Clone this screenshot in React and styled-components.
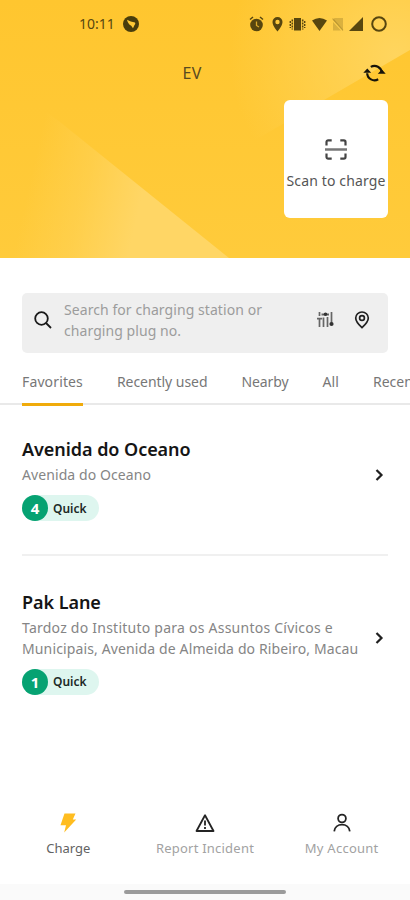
import React from 'react';
import styled, { createGlobalStyle } from 'styled-components';

const GlobalStyle = createGlobalStyle`
  * { box-sizing: border-box; }
  body { margin: 0; background: #fff; font-family: "Noto Sans", "Open Sans", sans-serif; }
  button { border: 0; padding: 0; background: none; font: inherit; color: inherit; display: flex; }
  svg { display: block; flex: none; }
`;

const Screen = styled.div`
  width: 410px;
  height: 900px;
  overflow: hidden;
  display: flex;
  flex-direction: column;
  background: #fff;
`;

const Hero = styled.header`
  position: relative;
  height: 258px;
  flex: none;
  display: flex;
  flex-direction: column;
  background: linear-gradient(#ffc62f, #ffcb3b);
`;

const Beams = styled.svg`
  position: absolute;
  inset: 0;
`;

const StatusBar = styled.div`
  position: relative;
  height: 48px;
  padding: 0 22px 0 79px;
  display: flex;
  align-items: center;
  color: #57460f;
`;

const Clock = styled.span`
  font-size: 14px;
  line-height: 20px;
  width: 44px;
`;

const StatusIcons = styled.div`
  margin-left: auto;
  display: flex;
  align-items: center;
`;

const TitleBar = styled.div`
  position: relative;
  height: 49px;
  padding: 0 24px 0 48px;
  display: flex;
  align-items: center;
  justify-content: space-between;
`;

const Title = styled.h1`
  flex: 1;
  margin: 0;
  padding-right: 27px;
  text-align: center;
  font-size: 16px;
  font-weight: 400;
  line-height: 22px;
  letter-spacing: 0.3px;
  color: #594a20;
`;

const ScanCard = styled.button`
  && {
    position: relative;
    align-self: flex-end;
    width: 104px;
    height: 118px;
    margin: 3px 22px 0 0;
    padding-top: 39px;
    border-radius: 6px;
    background: #fff;
    flex-direction: column;
    align-items: center;
    gap: 10px;
    font-size: 14px;
    line-height: 21px;
    letter-spacing: 0.13px;
    white-space: nowrap;
    color: #555;
  }
`;

const SearchBox = styled.div`
  height: 60px;
  margin: 35px 22px 0;
  padding: 0 18px 7px 12px;
  flex: none;
  display: flex;
  align-items: center;
  border-radius: 5px;
  background: #efefef;
`;

const Placeholder = styled.p`
  margin: 0 0 0 12px;
  width: 210px;
  font-size: 14px;
  line-height: 21px;
  letter-spacing: 0.07px;
  color: #9c9c9c;
`;

const SearchActions = styled.div`
  margin-left: auto;
  display: flex;
  align-items: center;
  gap: 18px;
`;

const Tabs = styled.nav`
  height: 53px;
  flex: none;
  display: flex;
  gap: 34px;
  padding: 18px 0 0 22px;
  overflow: hidden;
  background: linear-gradient(#e9e9e9, #e9e9e9) 0 50px / 100% 2px no-repeat;
`;

const Tab = styled.button`
  && {
    flex: none;
    height: 35px;
    font-size: 14px;
    line-height: 21px;
    letter-spacing: ${(p) => p.$track || 0}px;
    white-space: nowrap;
    color: #777;
    border-bottom: 3px solid ${(p) => (p.$active ? '#f0ab0b' : 'transparent')};
  }
`;

const Stations = styled.main`
  padding: 0 22px;
  flex: 1;
`;

const Station = styled.article`
  display: flex;
  align-items: center;
  height: ${(p) => p.$height}px;
  padding-top: ${(p) => p.$top}px;
  padding-bottom: ${(p) => p.$bottom}px;
  border-bottom: ${(p) => (p.$divided ? '2px solid #f0f0f0' : '0')};
`;

const Details = styled.div`
  flex: 1;
  min-width: 0;
`;

const Name = styled.h2`
  margin: 0 0 2px;
  font-size: 18px;
  font-weight: 600;
  line-height: 26px;
  letter-spacing: -0.05px;
  color: #151515;
`;

const Address = styled.p`
  margin: 0 0 10px;
  font-size: 14px;
  line-height: 21px;
  white-space: pre;
  color: #858585;
`;

const AddressLine = styled.span`
  display: block;
  letter-spacing: ${(p) => p.$track}px;
`;

const Badge = styled.div`
  width: 77px;
  height: 26px;
  display: flex;
  align-items: center;
  gap: 5px;
  border-radius: 13px;
  background: #def6ef;
  font-size: 12px;
  font-weight: 600;
  color: #1d2926;
`;

const Count = styled.span`
  width: 26px;
  height: 26px;
  border-radius: 50%;
  background: #06a272;
  color: #fff;
  font-size: 15px;
  font-weight: 700;
  line-height: 26px;
  text-align: center;
`;

const Chevron = styled.span`
  width: 17px;
  padding: 0 0 7px 4px;
`;

const BottomNav = styled.nav`
  height: 100px;
  flex: none;
  display: grid;
  grid-template-columns: repeat(3, 1fr);
  padding-top: 29px;
`;

const NavItem = styled.button`
  && {
    flex-direction: column;
    align-items: center;
    gap: 5px;
    font-size: 13px;
    line-height: 20px;
    letter-spacing: ${(p) => p.$track}px;
    color: ${(p) => (p.$active ? '#626262' : '#a2a2a2')};
  }
`;

const HomeBar = styled.div`
  height: 16px;
  flex: none;
  padding-top: 6px;
  background: #fafafa;
`;

const HomeHandle = styled.div`
  width: 162px;
  height: 4px;
  margin: 0 auto;
  border-radius: 2px;
  background: #9b9b9b;
`;

const stations = [
  {
    name: 'Avenida do Oceano',
    lines: [['Avenida do Oceano', 0.09]],
    count: 4,
    height: 150,
    top: 30,
    bottom: 33,
  },
  {
    name: 'Pak Lane',
    lines: [
      ['Tardoz do Instituto para os Assuntos Cívicos e', 0.24],
      ['Municipais, Avenida de Almeida do Ribeiro, Macau', 0.13],
    ],
    count: 1,
    height: 140,
    top: 32,
    bottom: 1,
  },
];

function HeroBeams() {
  return (
    <Beams width="410" height="258" viewBox="0 0 410 258">
      <defs>
        <linearGradient id="lower" gradientUnits="userSpaceOnUse" x1="30" y1="180" x2="140" y2="205">
          <stop offset="0" stopColor="#ffd665" stopOpacity="0" />
          <stop offset="0.5" stopColor="#ffd665" stopOpacity="0.4" />
          <stop offset="1" stopColor="#ffd665" />
        </linearGradient>
        <radialGradient id="upper" gradientUnits="userSpaceOnUse" cx="395" cy="55" r="165">
          <stop offset="0" stopColor="#ffd55e" />
          <stop offset="1" stopColor="#ffd55e" stopOpacity="0" />
        </radialGradient>
      </defs>
      <path d="M0 78 L60 122 L229 258 H0Z" fill="url(#lower)" />
      <path d="M180 0 H410 V50 L324 100 L180 184Z" fill="url(#upper)" />
    </Beams>
  );
}

function StatusGlyphs() {
  return (
    <svg width="140" height="20" viewBox="248 14 140 20" fill="none" stroke="currentColor">
      <circle cx="256.5" cy="25" r="6.3" fill="currentColor" stroke="none" />
      <path d="M250 19.5l3-2.5M263 19.5l-3-2.5" strokeWidth="1.5" />
      <path d="M256.5 21.5v4l2.5 1.5" stroke="#dcaa2a" strokeWidth="1.3" />
      <path
        d="M277.5 17a5 5 0 0 0-5 5c0 4 5 9.500 5 9.500s5-5.500 5-9.500a5 5 0 0 0-5-5zm0 2.800a2.200 2.200 0 1 1 0 4.400 2.200 2.200 0 0 1 0-4.400z"
        fill="currentColor"
        fillRule="evenodd"
        stroke="none"
      />
      <path d="M294 18h7v12.500h-7z" fill="currentColor" stroke="none" />
      <path d="M292.300 19.500v10M302.700 19.500v10" strokeWidth="1.500" strokeDasharray="2 1" />
      <path d="M290.300 21v7M304.700 21v7" strokeWidth="1.400" strokeDasharray="2 1" />
      <path d="M312 20.500q7.500-5 15 0L319.500 31z" fill="currentColor" stroke="none" />
      <path d="M333 20l10 10.500V18h-8.500zM333 22v8.500h8z" fill="currentColor" stroke="none" opacity=".22" />
      <path d="M332.500 18.500L343 30.500" strokeWidth="1.200" opacity=".25" />
      <path d="M349 31h14V17z" fill="currentColor" stroke="none" />
      <circle cx="379" cy="24" r="6.800" strokeWidth="2" />
    </svg>
  );
}

function AppGlyph() {
  return (
    <svg width="16" height="16" viewBox="0 0 16 16">
      <circle cx="8" cy="8" r="8" fill="#493d0c" />
      <path d="M4 3.800l3.800 1.700 4.200 1c.6 1 .2 2-.6 2.700L10 12.300 8.200 9.800C5.800 8.500 4.700 6.500 4 3.800z" fill="#ffc936" />
    </svg>
  );
}

function SyncIcon() {
  return (
    <svg width="23" height="18" viewBox="0 0 23 18" fill="none" stroke="#17140a" strokeWidth="2.200">
      <path d="M7.800 2.900a7.300 7.300 0 0 1 11 5.700M15.200 15.300A7.300 7.300 0 0 1 4.200 9.200" />
      <path d="M14.800 9.800h7.900L18.900 5.600zM.3 8.800h7.900L4.300 4.600z" fill="#17140a" stroke="none" />
    </svg>
  );
}

function ScanIcon() {
  return (
    <svg width="22" height="21" viewBox="0 0 22 21" fill="none" stroke="#444" strokeWidth="2.200">
      <path d="M1.500 6.500V3a1.700 1.700 0 0 1 1.700-1.700h3.500M15.300 1.300h3.500A1.700 1.700 0 0 1 20.500 3v3.500M20.500 14.500V18a1.700 1.700 0 0 1-1.700 1.700h-3.500M6.700 19.700H3.200A1.700 1.700 0 0 1 1.500 18v-3.500" />
      <path d="M0 10.500h22" stroke="#777" strokeWidth="2.500" />
    </svg>
  );
}

function SearchIcon() {
  return (
    <svg width="18" height="18" viewBox="0 0 18 18" fill="none" stroke="#191919" strokeWidth="1.800">
      <circle cx="7.500" cy="7.500" r="6.300" />
      <path d="M12 12l5 5" />
    </svg>
  );
}

function FilterIcon() {
  return (
    <svg width="20" height="17" viewBox="-1 0 20 17" stroke="#666" fill="#333">
      <path d="M2.500 1v4M2.500 8v8M6.500 6.500v9.500M10.500 6v10M14.500 1v11" strokeWidth="1.700" />
      <path d="M0 7.700h5.200M4.500 3.500h7.500" strokeWidth="1.800" />
      <circle cx="8.500" cy="3.300" r="1.800" stroke="none" />
      <circle cx="14.500" cy="13" r="2.100" stroke="none" />
    </svg>
  );
}

function PinIcon() {
  return (
    <svg width="16" height="18" viewBox="0 0 16 18" fill="none" stroke="#202020" strokeWidth="1.700">
      <path d="M8 16.700C4.500 13.500 1.700 10.300 1.700 7a6.300 6 0 0 1 12.600 0c0 3.300-2.800 6.500-6.300 9.700z" />
      <circle cx="8" cy="7" r="2.400" />
    </svg>
  );
}

function ChevronIcon() {
  return (
    <svg width="9" height="12" viewBox="0 0 9 12" fill="none" stroke="#202020" strokeWidth="2.200">
      <path d="M1.500 1l5 5-5 5" />
    </svg>
  );
}

function BoltIcon() {
  return (
    <svg width="18" height="20" viewBox="0.500 0 18 20" fill="#ffbd20">
      <path d="M6 .5h11L14.300 6.500h3.400L5.700 19.500l1.800-7.300H2l2-6z" />
    </svg>
  );
}

function WarningIcon() {
  return (
    <svg width="20" height="20" viewBox="0 0 20 20" fill="none" stroke="#242424" strokeWidth="1.800">
      <path d="M10 2.200L1.500 18h17z" strokeLinejoin="round" />
      <path d="M10 7.500v5M10 14v2" />
    </svg>
  );
}

function UserIcon() {
  return (
    <svg width="20" height="20" viewBox="0 0 20 20" fill="none" stroke="#242424" strokeWidth="1.800">
      <circle cx="10" cy="5.500" r="3.900" />
      <path d="M2.200 18.300c.5-4 3.700-6.600 7.800-6.600s7.300 2.600 7.800 6.600" />
    </svg>
  );
}

export default function App() {
  return (
    <Screen>
      <GlobalStyle />
      <Hero>
        <HeroBeams />
        <StatusBar>
          <Clock>10:11</Clock>
          <AppGlyph />
          <StatusIcons>
            <StatusGlyphs />
          </StatusIcons>
        </StatusBar>
        <TitleBar>
          <Title>EV</Title>
          <SyncIcon />
        </TitleBar>
        <ScanCard>
          <ScanIcon />
          Scan to charge
        </ScanCard>
      </Hero>
      <SearchBox>
        <SearchIcon />
        <Placeholder>Search for charging station or charging plug no.</Placeholder>
        <SearchActions>
          <FilterIcon />
          <PinIcon />
        </SearchActions>
      </SearchBox>
      <Tabs>
        <Tab $active $track={0.13}>Favorites</Tab>
        <Tab $track={-0.05}>Recently used</Tab>
        <Tab $track={-0.1}>Nearby</Tab>
        <Tab $track={0.1}>All</Tab>
        <Tab>Recent</Tab>
      </Tabs>
      <Stations>
        {stations.map((s, i) => (
          <Station key={s.name} $height={s.height} $top={s.top} $bottom={s.bottom} $divided={i === 0}>
            <Details>
              <Name>{s.name}</Name>
              <Address>
                {s.lines.map(([text, track]) => (
                  <AddressLine key={text} $track={track}>{text}</AddressLine>
                ))}
              </Address>
              <Badge>
                <Count>{s.count}</Count>
                Quick
              </Badge>
            </Details>
            <Chevron>
              <ChevronIcon />
            </Chevron>
          </Station>
        ))}
      </Stations>
      <BottomNav>
        <NavItem $active $track={0}>
          <BoltIcon />
          Charge
        </NavItem>
        <NavItem $track={0.22}>
          <WarningIcon />
          Report Incident
        </NavItem>
        <NavItem $track={0.26}>
          <UserIcon />
          My Account
        </NavItem>
      </BottomNav>
      <HomeBar>
        <HomeHandle />
      </HomeBar>
    </Screen>
  );
}
